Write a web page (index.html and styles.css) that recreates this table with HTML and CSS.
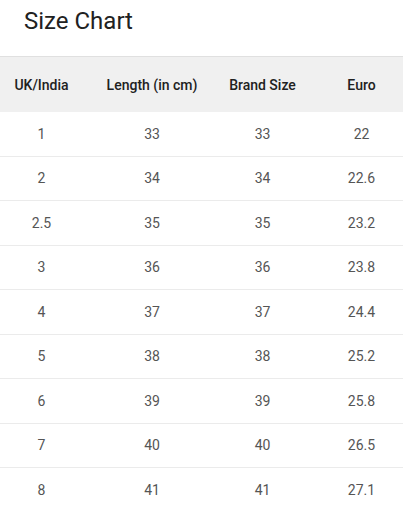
FILE: index.html
```html
<!DOCTYPE html>
<html>
<head>
<meta charset="utf-8">
<link rel="stylesheet" href="styles.css">
</head>
<body>
<div class="chart">
  <h1 class="title">Size Chart</h1>
  <table class="size-table">
    <colgroup>
      <col class="c1"><col class="c2"><col class="c3"><col class="c4">
    </colgroup>
    <thead>
      <tr><th>UK/India</th><th>Length (in cm)</th><th>Brand Size</th><th class="euro">Euro</th></tr>
    </thead>
    <tbody>
      <tr><td>1</td><td>33</td><td>33</td><td class="euro">22</td></tr>
      <tr><td>2</td><td>34</td><td>34</td><td class="euro">22.6</td></tr>
      <tr><td>2.5</td><td>35</td><td>35</td><td class="euro">23.2</td></tr>
      <tr><td>3</td><td>36</td><td>36</td><td class="euro">23.8</td></tr>
      <tr><td>4</td><td>37</td><td>37</td><td class="euro">24.4</td></tr>
      <tr><td>5</td><td>38</td><td>38</td><td class="euro">25.2</td></tr>
      <tr><td>6</td><td>39</td><td>39</td><td class="euro">25.8</td></tr>
      <tr><td>7</td><td>40</td><td>40</td><td class="euro">26.5</td></tr>
      <tr><td>8</td><td>41</td><td>41</td><td class="euro">27.1</td></tr>
    </tbody>
  </table>
</div>
</body>
</html>
```
FILE: styles.css
```css
html, body {
  margin: 0;
  padding: 0;
  background: #fff;
  overflow: hidden;
}
body {
  font-family: Roboto, "Liberation Sans", sans-serif;
  color: #212121;
}
.title {
  margin: 0;
  padding: 7px 24px 21px;
  font-size: 24px;
  line-height: 28px;
  font-weight: 400;
  color: #212121;
}
.size-table {
  width: 403px;
  border-collapse: collapse;
  table-layout: fixed;
}
.c1 { width: 83px; }
.c2 { width: 138px; }
.c3 { width: 83px; }
.c4 { width: 99px; }
.size-table th {
  background: #f0f0f0;
  border-top: 1px solid #e0e0e0;
  height: 55px;
  padding: 0;
  font-size: 14px;
  font-weight: 500;
  color: #212121;
  text-align: center;
  vertical-align: middle;
}
.size-table td {
  height: 43.5px;
  padding: 0;
  font-size: 14px;
  color: #555;
  text-align: center;
  vertical-align: middle;
  border-bottom: 1px solid #ebebeb;
}
.size-table .euro {
  padding-left: 16px;
}
```
